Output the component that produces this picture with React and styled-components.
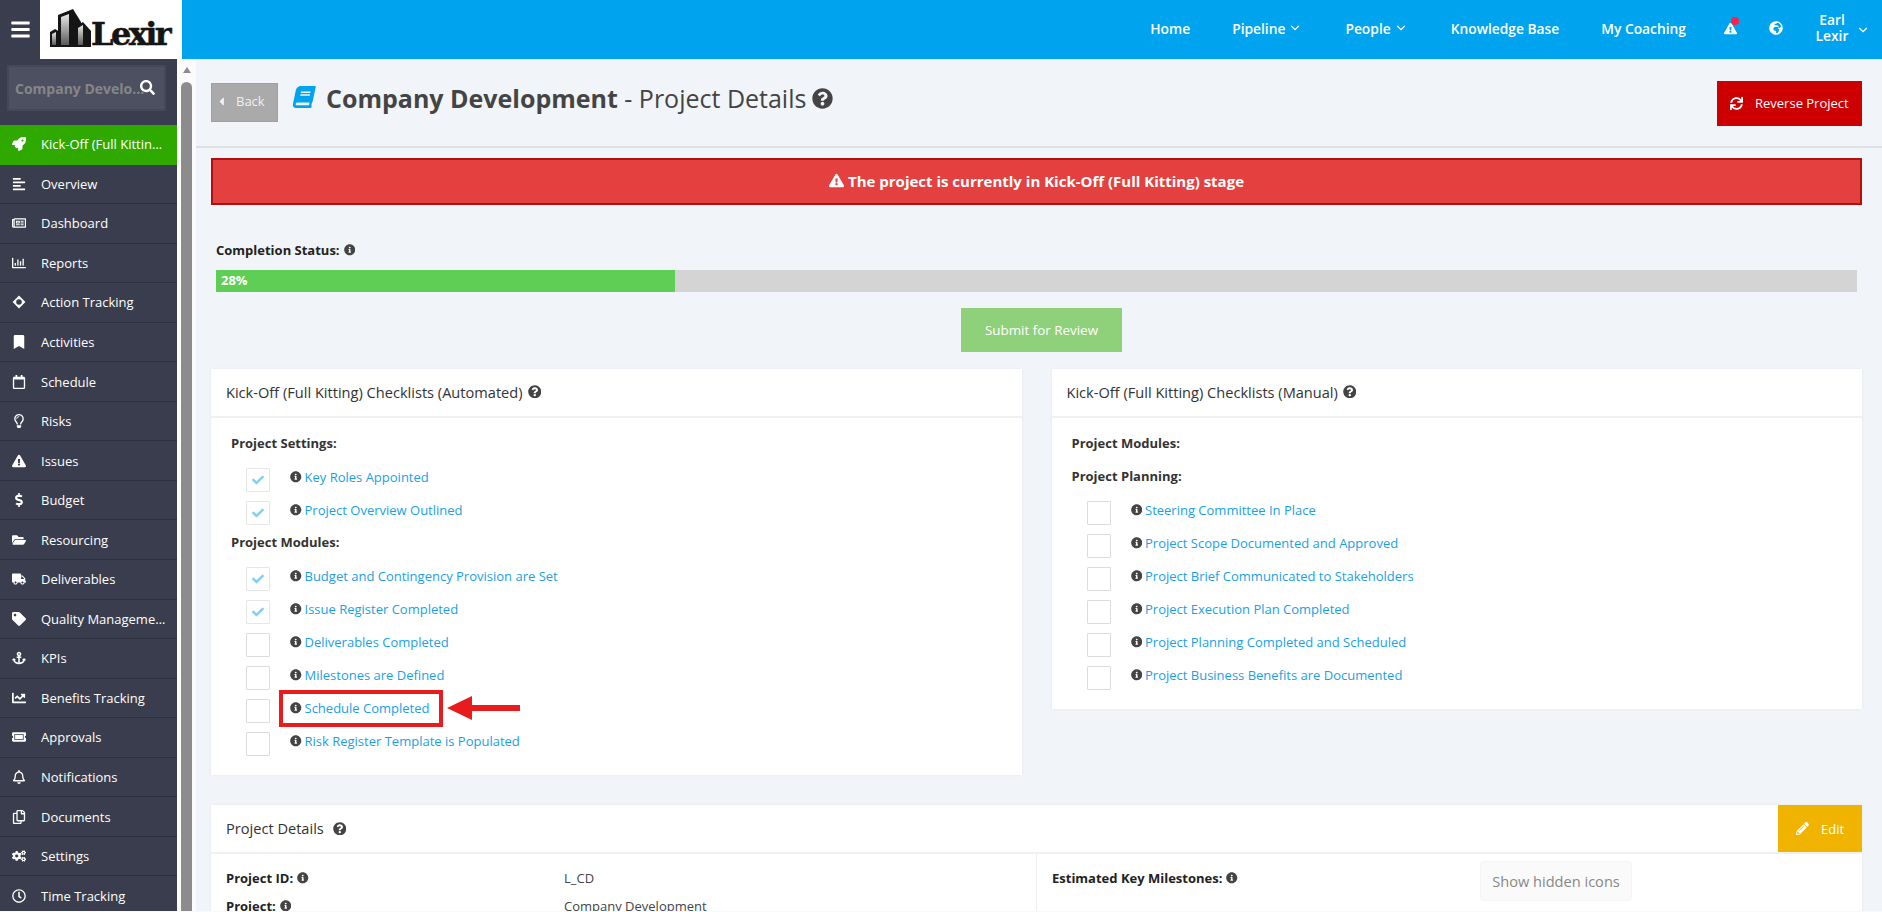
import React from 'react';
import styled, { createGlobalStyle } from 'styled-components';
import {
  FaAlignLeft, FaAnchor, FaBars, FaBook, FaBookmark, FaCaretLeft, FaChartLine,
  FaCheck, FaCogs, FaDollarSign, FaExclamationTriangle, FaFolderOpen, FaGlobeAfrica, FaInfoCircle,
  FaPencilAlt, FaQuestionCircle, FaRocket, FaSearch, FaSync, FaTag, FaTicketAlt, FaTruck,
  FaRegBell, FaRegCalendar, FaRegChartBar, FaRegClock, FaRegCopy, FaRegLightbulb, FaRegNewspaper,
} from 'react-icons/fa';
import { FiChevronDown } from 'react-icons/fi';

const GlobalStyle = createGlobalStyle`
  html, body {
    margin: 0;
    height: 100%;
    overflow: hidden;
    background: #f8f9fa;
  }
  body {
    font-family: "Open Sans", "Liberation Sans", sans-serif;
    font-size: 13px;
    color: #333;
  }
  * {
    box-sizing: border-box;
  }
`;

const Page = styled.div`
  display: flex;
  flex-direction: column;
  height: 911px;
  overflow: hidden;
`;

const TopBar = styled.header`
  display: flex;
  align-items: stretch;
  flex: 0 0 59px;
  background: #00a3ee;
`;

const MenuToggle = styled.div`
  display: flex;
  align-items: center;
  justify-content: center;
  width: 40px;
  background: #3a3d4d;
  color: #fff;
  font-size: 21px;
`;

const LogoBox = styled.div`
  display: flex;
  align-items: flex-end;
  gap: 0;
  width: 142px;
  padding: 0 0 12px 10px;
  background: #fff;
`;

const LogoText = styled.span`
  font-family: "DejaVu Serif", serif;
  font-weight: 900;
  font-size: 32px;
  letter-spacing: -2.6px;
  line-height: 26px;
  color: #151515;
  -webkit-text-stroke: 0.5px #151515;
`;

const TopNav = styled.nav`
  display: flex;
  align-items: center;
  margin-left: auto;
  padding-right: 12px;
`;

const NavLink = styled.a`
  display: flex;
  align-items: center;
  gap: 3px;
  padding: 0 ${(p) => (p.$dropdown ? '22px' : '21px')} 0 21px;
  color: #fff;
  font-size: 13.8px;
  font-weight: 600;
  white-space: nowrap;
  margin-top: -3px;
`;

const NavIcon = styled.span`
  position: relative;
  display: flex;
  margin-left: ${(p) => p.$gap}px;
  color: #fff;
  font-size: ${(p) => p.$size}px;
  margin-top: -3px;
`;

const AlertDot = styled.i`
  position: absolute;
  top: -5px;
  right: -2px;
  width: 8px;
  height: 8px;
  border-radius: 50%;
  background: #ff1f4b;
`;

const UserMenu = styled.div`
  display: flex;
  align-items: center;
  margin-left: 29px;
  color: #fff;
  font-size: 13.8px;
  font-weight: 600;
`;

const UserName = styled.div`
  width: 40px;
  text-align: center;
  line-height: 16px;
  margin-top: -3px;
  margin-right: 4px;
`;

const Body = styled.div`
  display: flex;
  flex: 1;
  min-height: 0;
`;

const Sidebar = styled.aside`
  flex: 0 0 177px;
  background: #3a3d4d;
  overflow: hidden;
`;

const SearchWrap = styled.div`
  height: 66px;
  padding: 6px 11px 0 7px;
`;

const SearchBox = styled.div`
  position: relative;
  display: flex;
  align-items: center;
  height: 46px;
  padding: 0 16px 0 6px;
  background: #4d5061;
  border: 2px solid #454859;
  color: #868686;
  font-size: 14px;
  font-weight: 700;
`;

const SearchText = styled.span`
  white-space: nowrap;
  overflow: hidden;
  text-overflow: ellipsis;
`;

const SearchIcon = styled(FaSearch)`
  position: absolute;
  right: 9px;
  top: 13px;
  font-size: 15px;
  color: #fff;
`;

const SideItem = styled.div`
  display: flex;
  align-items: center;
  height: 39.55px;
  padding-left: 11px;
  background: ${(p) => (p.$active ? '#2fa800' : 'transparent')};
  border-bottom: 1px solid ${(p) => (p.$active ? '#2fa800' : '#2e303d')};
  color: #fff;
  font-size: 13px;
`;

const SideIcon = styled.span`
  display: flex;
  justify-content: center;
  flex: 0 0 16px;
  margin-right: 14px;
  font-size: 14px;
`;

const SideLabel = styled.span`
  white-space: nowrap;
  overflow: hidden;
  text-overflow: ellipsis;
  padding-right: 11px;
`;

const ScrollBar = styled.div`
  display: flex;
  flex-direction: column;
  align-items: center;
  flex: 0 0 19px;
  padding: 8px 4px 0;
  background: #fbfbfb;
`;

const ScrollArrow = styled.i`
  width: 0;
  height: 0;
  border-left: 4.5px solid transparent;
  border-right: 4.5px solid transparent;
  border-bottom: 6px solid #8c8c8c;
`;

const ScrollThumb = styled.div`
  flex: 1;
  width: 11px;
  margin-top: 9px;
  border-radius: 6px 6px 0 0;
  background: #8c8c8c;
`;

const Main = styled.main`
  flex: 1;
  min-width: 0;
  background: #f1f4f8;
  overflow: hidden;
`;

const PageHead = styled.div`
  display: flex;
  align-items: flex-start;
  height: 89px;
  padding: 22px 20px 0 15px;
  border-bottom: 2px solid #dde1e5;
`;

const BackButton = styled.a`
  display: flex;
  align-items: center;
  gap: 8px;
  width: 67px;
  height: 39px;
  margin-top: 2px;
  padding: 0 0 3px 3px;
  background: #aaa;
  border: 1px solid #a0a0a0;
  color: #f0f0f0;
  font-size: 13px;
`;

const TitleIcon = styled(FaBook)`
  margin: 5px 11px 0 15px;
  font-size: 22px;
  color: #00a3ee;
  transform: skewX(-12deg);
`;

const Title = styled.h1`
  display: flex;
  align-items: center;
  margin: 0;
  font-size: 25px;
  line-height: 35px;
  font-weight: 400;
  color: #444;
  white-space: pre;
`;

const TitleHelp = styled(FaQuestionCircle)`
  margin-left: 6px;
  font-size: 21px;
  color: #444;
`;

const ReverseButton = styled.a`
  display: flex;
  align-items: center;
  gap: 12px;
  width: 145px;
  height: 45px;
  margin: 0 0 0 auto;
  padding: 0 0 1px 13px;
  background: #cc0000;
  color: #fff;
  font-size: 13px;
`;

const Content = styled.div`
  padding: 10px 20px 0 15px;
`;

const AlertBar = styled.div`
  display: flex;
  align-items: center;
  justify-content: center;
  gap: 4px;
  height: 47px;
  padding-bottom: 2px;
  background: #e54040;
  border: 2px solid #b01010;
  color: #fff;
  font-size: 15px;
  font-weight: 700;
`;

const Completion = styled.div`
  padding: 0 5px;
`;

const CompletionLabel = styled.div`
  display: flex;
  align-items: center;
  gap: 4px;
  height: 20px;
  margin-top: 35px;
  font-size: 13px;
  font-weight: 700;
  color: #222;
`;

const ProgressTrack = styled.div`
  height: 22px;
  margin-top: 10px;
  background: #d4d4d4;
`;

const ProgressFill = styled.div`
  height: 100%;
  padding-left: 5px;
  background: #5fce55;
  color: #fff;
  font-size: 13px;
  font-weight: 700;
  line-height: 21px;
`;

const SubmitRow = styled.div`
  display: flex;
  justify-content: center;
  margin-top: 16px;
  padding-left: 10px;
`;

const SubmitButton = styled.a`
  display: flex;
  align-items: center;
  justify-content: center;
  width: 161px;
  height: 44px;
  background: #8fd07a;
  color: #fff;
  font-size: 13.4px;
`;

const CardGrid = styled.div`
  display: grid;
  grid-template-columns: 1fr 1fr;
  gap: 30px;
  align-items: start;
  margin-top: 17px;
`;

const Card = styled.section`
  position: relative;
  background: #fff;
  box-shadow: 0 0 3px rgba(0, 0, 0, 0.06);
`;

const CardHead = styled.div`
  display: flex;
  align-items: center;
  gap: 5px;
  height: 49px;
  padding: 0 15px 2px;
  border-bottom: 2px solid #f0f0f0;
  font-size: 14.6px;
  color: #333;
`;

const HelpIcon = styled(FaQuestionCircle)`
  font-size: 13.5px;
  color: #444;
`;

const CardBody = styled.div`
  padding: 17px 20px 10px;
`;

const GroupTitle = styled.div`
  height: 18px;
  margin-bottom: 15px;
  font-size: 13px;
  line-height: 16px;
  font-weight: 700;
  color: #333;
`;

const CheckRow = styled.div`
  display: flex;
  align-items: flex-start;
  height: 24px;
  margin: 0 0 9px 15px;
`;

const CheckBox = styled.span`
  display: flex;
  align-items: center;
  justify-content: center;
  flex: 0 0 24px;
  height: 24px;
  margin-right: 20px;
  border: 1px solid ${(p) => (p.$checked ? '#e6e6e6' : '#dcdcdc')};
  border-radius: 1px;
  color: #82cff5;
  font-size: 12px;
`;

const CheckLink = styled.span`
  position: relative;
  display: flex;
  align-items: center;
  gap: 3px;
  height: 18px;
  color: #1a9fe8;
  font-size: 13px;
  white-space: nowrap;
`;

const InfoIcon = styled(FaInfoCircle)`
  flex: none;
  font-size: 11.5px;
  color: #444;
`;

const Highlight = styled.span`
  position: absolute;
  left: -11px;
  right: -14px;
  top: -9px;
  bottom: -10px;
  border: 4px solid #e81c1c;
`;

const Arrow = styled.svg`
  position: absolute;
  left: calc(100% + 18px);
  top: -4px;
`;

const DetailsCard = styled(Card)`
  margin-top: 30px;
`;

const DetailsHead = styled(CardHead)`
  gap: 9px;
  padding: 0 0 0 15px;
`;

const DetailsTitle = styled.span`
  margin-bottom: 2px;
`;

const EditButton = styled.a`
  display: flex;
  align-items: center;
  justify-content: center;
  gap: 12px;
  width: 84px;
  height: 47px;
  margin: 0 0 0 auto;
  background: #f0b400;
  color: #fff;
  font-size: 13px;
`;

const DetailsGrid = styled.div`
  display: grid;
  grid-template-columns: 825px 1fr;
  height: 200px;
`;

const DetailsCol = styled.div`
  padding: 14px 15px;
  & + & {
    border-left: 1px solid #eee;
  }
`;

const DetailRow = styled.div`
  display: grid;
  grid-template-columns: 338px 1fr;
  height: 28px;
  line-height: 20px;
`;

const DetailLabel = styled.div`
  display: flex;
  align-items: center;
  gap: 4px;
  height: 20px;
  font-size: 13px;
  font-weight: 700;
  color: #222;
`;

const DetailValue = styled.div`
  font-size: 13px;
  color: #444;
`;

const HiddenIconsTip = styled.div`
  position: absolute;
  left: 1269px;
  top: 56px;
  display: flex;
  align-items: center;
  justify-content: center;
  width: 152px;
  height: 40px;
  background: #fafafa;
  border: 1px solid #f5f5f5;
  border-radius: 4px;
  color: #888;
  font-size: 14.6px;
`;

function TargetIcon() {
  return (
    <svg width="14" height="14" viewBox="0 0 14 14">
      <path
        d="M7 .6 13.4 7 7 13.4.6 7zM7 4.2a2.8 2.8 0 1 0 0 5.6 2.8 2.8 0 0 0 0-5.6z"
        fill="#fff"
        fillRule="evenodd"
      />
    </svg>
  );
}

const sideItems = [
  { icon: <FaRocket />, label: 'Kick-Off (Full Kitting) Stage', active: true },
  { icon: <FaAlignLeft />, label: 'Overview' },
  { icon: <FaRegNewspaper />, label: 'Dashboard' },
  { icon: <FaRegChartBar />, label: 'Reports' },
  { icon: <TargetIcon />, label: 'Action Tracking' },
  { icon: <FaBookmark />, label: 'Activities' },
  { icon: <FaRegCalendar />, label: 'Schedule' },
  { icon: <FaRegLightbulb />, label: 'Risks' },
  { icon: <FaExclamationTriangle />, label: 'Issues' },
  { icon: <FaDollarSign />, label: 'Budget' },
  { icon: <FaFolderOpen />, label: 'Resourcing' },
  { icon: <FaTruck />, label: 'Deliverables' },
  { icon: <FaTag />, label: 'Quality Management' },
  { icon: <FaAnchor />, label: 'KPIs' },
  { icon: <FaChartLine />, label: 'Benefits Tracking' },
  { icon: <FaTicketAlt />, label: 'Approvals' },
  { icon: <FaRegBell />, label: 'Notifications' },
  { icon: <FaRegCopy />, label: 'Documents' },
  { icon: <FaCogs />, label: 'Settings' },
  { icon: <FaRegClock />, label: 'Time Tracking' },
];

const autoGroups = [
  {
    title: 'Project Settings:',
    items: [
      { label: 'Key Roles Appointed', checked: true },
      { label: 'Project Overview Outlined', checked: true },
    ],
  },
  {
    title: 'Project Modules:',
    items: [
      { label: 'Budget and Contingency Provision are Set', checked: true },
      { label: 'Issue Register Completed', checked: true },
      { label: 'Deliverables Completed' },
      { label: 'Milestones are Defined' },
      { label: 'Schedule Completed', marked: true },
      { label: 'Risk Register Template is Populated' },
    ],
  },
];

const manualGroups = [
  { title: 'Project Modules:', items: [] },
  {
    title: 'Project Planning:',
    items: [
      { label: 'Steering Committee In Place' },
      { label: 'Project Scope Documented and Approved' },
      { label: 'Project Brief Communicated to Stakeholders' },
      { label: 'Project Execution Plan Completed' },
      { label: 'Project Planning Completed and Scheduled' },
      { label: 'Project Business Benefits are Documented' },
    ],
  },
];

function LogoMark() {
  return (
    <svg width="41" height="39" viewBox="0 0 41 39">
      <defs>
        <linearGradient id="facade" x1="0" y1="0" x2="0" y2="1">
          <stop offset="0" stopColor="#e8e8e8" />
          <stop offset="1" stopColor="#5a5a5a" />
        </linearGradient>
      </defs>
      <path d="M0 39V24l5-3 5 3v15z" fill="#151515" />
      <path d="M8 39V7l15-6 8 13v25z" fill="#151515" />
      <path d="M26 39V18l7-4 8 9v16z" fill="#151515" />
      <path d="M2 37V26l4-2v13z" fill="url(#facade)" />
      <path d="M11 37V9l8-3v31z" fill="url(#facade)" />
      <path d="M28 37V20l5-3v20z" fill="url(#facade)" />
    </svg>
  );
}

function Checklist({ groups }) {
  return groups.map((group) => (
    <div key={group.title}>
      <GroupTitle>{group.title}</GroupTitle>
      {group.items.map((item) => (
        <CheckRow key={item.label}>
          <CheckBox $checked={item.checked}>{item.checked && <FaCheck />}</CheckBox>
          <CheckLink>
            <InfoIcon />
            {item.label}
            {item.marked && <Highlight />}
            {item.marked && (
              <Arrow width="74" height="26" viewBox="0 0 74 26">
                <path d="M0 13 25 1v9h48v6H25v9z" fill="#e81c1c" />
              </Arrow>
            )}
          </CheckLink>
        </CheckRow>
      ))}
    </div>
  ));
}

export default function App() {
  return (
    <Page>
      <GlobalStyle />
      <TopBar>
        <MenuToggle><FaBars /></MenuToggle>
        <LogoBox>
          <LogoMark />
          <LogoText>Lexir</LogoText>
        </LogoBox>
        <TopNav>
          <NavLink>Home</NavLink>
          <NavLink $dropdown>Pipeline<FiChevronDown size={14} /></NavLink>
          <NavLink $dropdown>People<FiChevronDown size={14} /></NavLink>
          <NavLink>Knowledge Base</NavLink>
          <NavLink>My Coaching</NavLink>
          <NavIcon $gap={17} $size={13}><FaExclamationTriangle /><AlertDot /></NavIcon>
          <NavIcon $gap={32} $size={14}><FaGlobeAfrica /></NavIcon>
          <UserMenu>
            <UserName>Earl Lexir</UserName>
            <FiChevronDown size={14} />
          </UserMenu>
        </TopNav>
      </TopBar>
      <Body>
        <Sidebar>
          <SearchWrap>
            <SearchBox>
              <SearchText>Company Development</SearchText>
              <SearchIcon />
            </SearchBox>
          </SearchWrap>
          {sideItems.map((item) => (
            <SideItem key={item.label} $active={item.active}>
              <SideIcon>{item.icon}</SideIcon>
              <SideLabel>{item.label}</SideLabel>
            </SideItem>
          ))}
        </Sidebar>
        <ScrollBar>
          <ScrollArrow />
          <ScrollThumb />
        </ScrollBar>
        <Main>
          <PageHead>
            <BackButton><FaCaretLeft />Back</BackButton>
            <TitleIcon />
            <Title>
              <b>Company Development</b> - Project Details
              <TitleHelp />
            </Title>
            <ReverseButton><FaSync />Reverse Project</ReverseButton>
          </PageHead>
          <Content>
            <AlertBar>
              <FaExclamationTriangle /> The project is currently in Kick-Off (Full Kitting) stage
            </AlertBar>
            <Completion>
              <CompletionLabel>Completion Status: <InfoIcon /></CompletionLabel>
              <ProgressTrack>
                <ProgressFill style={{ width: '28%' }}>28%</ProgressFill>
              </ProgressTrack>
            </Completion>
            <SubmitRow>
              <SubmitButton>Submit for Review</SubmitButton>
            </SubmitRow>
            <CardGrid>
              <Card>
                <CardHead>Kick-Off (Full Kitting) Checklists (Automated) <HelpIcon /></CardHead>
                <CardBody><Checklist groups={autoGroups} /></CardBody>
              </Card>
              <Card>
                <CardHead>Kick-Off (Full Kitting) Checklists (Manual) <HelpIcon /></CardHead>
                <CardBody><Checklist groups={manualGroups} /></CardBody>
              </Card>
            </CardGrid>
            <DetailsCard>
              <DetailsHead>
                <DetailsTitle>Project Details</DetailsTitle>
                <HelpIcon />
                <EditButton><FaPencilAlt />Edit</EditButton>
              </DetailsHead>
              <DetailsGrid>
                <DetailsCol>
                  <DetailRow>
                    <DetailLabel>Project ID: <InfoIcon /></DetailLabel>
                    <DetailValue>L_CD</DetailValue>
                  </DetailRow>
                  <DetailRow>
                    <DetailLabel>Project: <InfoIcon /></DetailLabel>
                    <DetailValue>Company Development</DetailValue>
                  </DetailRow>
                </DetailsCol>
                <DetailsCol>
                  <DetailLabel>Estimated Key Milestones: <InfoIcon /></DetailLabel>
                </DetailsCol>
              </DetailsGrid>
              <HiddenIconsTip>Show hidden icons</HiddenIconsTip>
            </DetailsCard>
          </Content>
        </Main>
      </Body>
    </Page>
  );
}
